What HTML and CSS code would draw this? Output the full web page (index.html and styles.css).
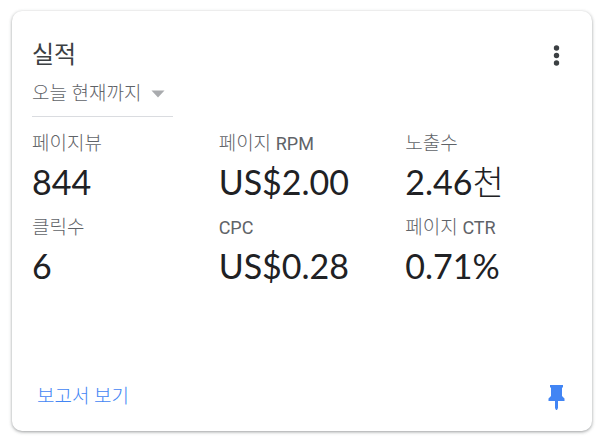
FILE: index.html
```html
<!DOCTYPE html>
<html lang="ko">
<head>
<meta charset="utf-8">
<meta name="viewport" content="width=device-width, initial-scale=1">
<title>실적</title>
<link rel="stylesheet" href="styles.css">
</head>
<body>
<main class="card">
  <header class="card-header">
    <h1 class="title">실적</h1>
    <button class="icon-button" type="button" aria-label="메뉴">
      <svg width="24" height="24" viewBox="0 0 24 24" fill="#3c4043" aria-hidden="true"><circle cx="12.500" cy="5" r="2.700"/><circle cx="12.500" cy="12.500" r="2.700"/><circle cx="12.500" cy="20" r="2.700"/></svg>
    </button>
  </header>
  <div class="period">
    <select class="period-select" aria-label="기간">
      <option>오늘 현재까지</option>
    </select>
    <svg class="period-arrow" width="14" height="8" viewBox="0 0 14 8" fill="#a9abae" aria-hidden="true"><path d="M.5.5h13L7 7.5z"/></svg>
  </div>
  <dl class="stats">
    <div><dt>페이지뷰</dt><dd>844</dd></div>
    <div><dt>페이지 <span class="latin">RPM</span></dt><dd>US$2.00</dd></div>
    <div><dt>노출수</dt><dd>2.46<span class="unit">천</span></dd></div>
    <div><dt>클릭수</dt><dd>6</dd></div>
    <div><dt><span class="latin">CPC</span></dt><dd>US$0.28</dd></div>
    <div><dt>페이지 <span class="latin">CTR</span></dt><dd>0.71%</dd></div>
  </dl>
  <footer class="card-footer">
    <a class="report-link" href="#">보고서 보기</a>
    <button class="icon-button" type="button" aria-label="고정">
      <svg width="24" height="26" viewBox="0 0 24 26" fill="#4285f4" aria-hidden="true"><path d="M6 1h13v2l-1 1v8l2.500 2.500V17H14v7l-1 2h-1l-1-2v-7H4.500v-2.500L7 12V4L6 3z"/></svg>
    </button>
  </footer>
</main>
</body>
</html>
```
FILE: styles.css
```css
* {
  box-sizing: border-box;
}

body {
  margin: 0;
  padding: 11px 15px 12px 12px;
  min-height: 100vh;
  display: flex;
  background: #fff;
  color: #5f6368;
  font-family: Roboto, "Noto Sans CJK KR", sans-serif;
  font-size: 19px;
  font-weight: 400;
}

.card {
  flex: 1;
  display: flex;
  flex-direction: column;
  padding: 24px 0 16px 20px;
  border-radius: 10px;
  background: #fff;
  box-shadow: 0 1px 3px rgba(60, 64, 67, 0.4), 0 1px 4px rgba(60, 64, 67, 0.15);
}

.card-header,
.card-footer {
  display: flex;
  align-items: center;
  justify-content: space-between;
  padding-right: 24px;
}

.title {
  margin: 0;
  color: #3c4043;
  font-size: 24px;
  line-height: 40px;
  font-weight: 400;
}

.icon-button {
  display: flex;
  padding: 0;
  border: 0;
  background: none;
  cursor: pointer;
}

.period {
  display: flex;
  align-items: center;
  align-self: flex-start;
  position: relative;
  width: 141px;
  border-bottom: 1px solid #dadce0;
}

.period-select {
  appearance: none;
  width: 100%;
  height: 41px;
  margin: 0;
  padding: 0 0 4px;
  border: 0;
  background: none;
  color: inherit;
  font: inherit;
  font-weight: 300;
}

.period-arrow {
  position: absolute;
  right: 8px;
  top: 15px;
  pointer-events: none;
}

.stats {
  display: grid;
  grid-template-columns: repeat(3, 1fr);
  margin: 9px 0 0;
}

dt {
  line-height: 36px;
  font-weight: 300;
}

.latin {
  font-size: 18px;
  font-weight: 400;
}

dd {
  margin: 0;
  color: #202124;
  font-family: Lato, "Noto Sans CJK KR", sans-serif;
  font-size: 34px;
  line-height: 40px;
  padding-bottom: 8px;
}

.unit {
  font-weight: 300;
}

.card-footer {
  margin-top: auto;
  padding-left: 5px;
}

.report-link {
  color: #4285f4;
  font-weight: 300;
  line-height: 36px;
  text-decoration: none;
}
```
